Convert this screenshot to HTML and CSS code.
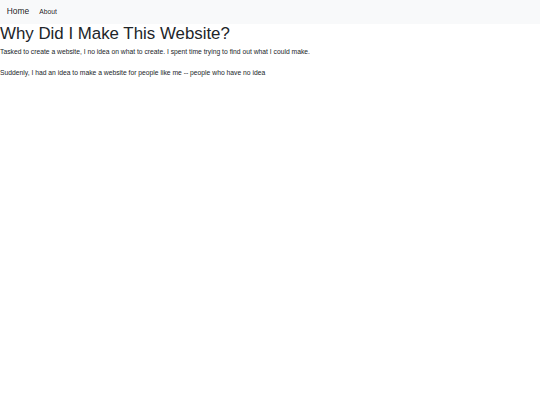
FILE: index.html
```html
<!DOCTYPE html>
<html lang="en">

<head>
    <meta charset="UTF-8">
    <meta name="viewport" content="width=device-width, initial-scale=1.0">
    <title>Why Did I Make This Website?</title>
    <link rel="stylesheet" href="styles.css">
</head>

<body>
    <nav class="navbar">
        <a class="navbar-brand" href="#">Home</a>
        <ul class="navbar-nav">
            <li class="nav-item"><a class="nav-link" href="#">About</a></li>
        </ul>
    </nav>

    <h1 class="title">Why Did I Make This Website?</h1>
    <p class="text">Tasked to create a website, I no idea on what to create. I spent time trying to find out what I could make.</p>
    <p class="text">Suddenly, I had an idea to make a website for people like me -- people who have no idea</p>
</body>

</html>
```
FILE: styles.css
```css
body {
    margin: 0;
    font-family: "Liberation Sans", Arial, sans-serif;
    font-size: 6.75px;
    line-height: 1.5;
    color: #212529;
    background-color: #fff;
}

.navbar {
    display: flex;
    align-items: center;
    padding: 3.375px 6.75px;
    background-color: #f8f9fa;
}

.navbar-brand {
    padding: 2.11px 0;
    margin-right: 6.75px;
    font-size: 8.4375px;
    line-height: 1.5;
    color: rgba(0, 0, 0, 0.9);
    text-decoration: none;
}

.navbar-nav {
    display: flex;
    margin: 0;
    padding: 0;
    list-style: none;
}

.nav-link {
    display: block;
    padding: 3.375px;
    color: rgba(0, 0, 0, 0.9);
    text-decoration: none;
}

.title {
    margin: 0 0 3.375px;
    font-size: 16.875px;
    font-weight: 500;
    line-height: 1.2;
}

.text {
    margin: 0 0 10.125px;
}
```
